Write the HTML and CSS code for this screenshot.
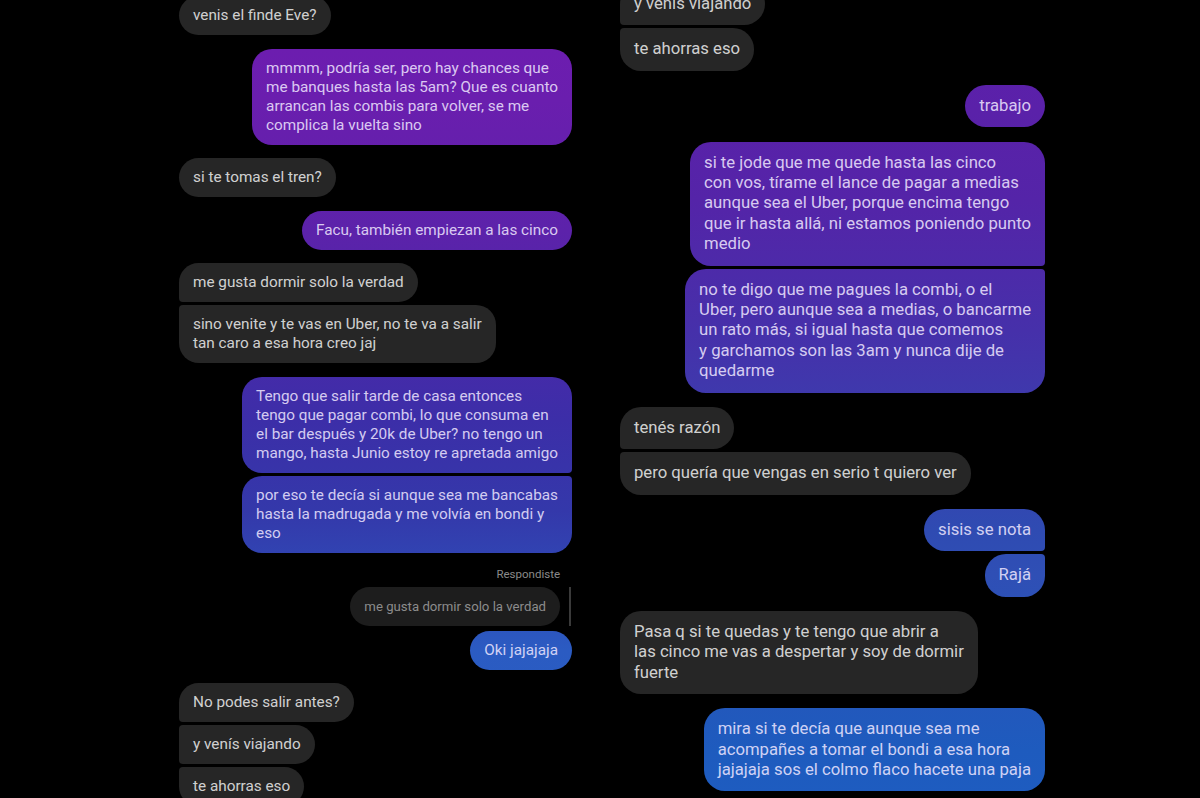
FILE: index.html
```html
<!DOCTYPE html>
<html lang="es">

<head>
    <meta charset="UTF-8">
    <meta name="viewport" content="width=device-width, initial-scale=1.0">
    <title>Chat</title>

    <link rel="stylesheet" href="styles.css">
</head>

<body>

    <div class="screens">

        <!-- left screenshot -->
        <div class="chat chat-left">

            <div class="group in">
                <div class="bubble">venis el finde Eve?</div>
            </div>

            <div class="group out">
                <div class="bubble">mmmm, podría ser, pero hay chances que<br>me banques hasta las 5am? Que es cuanto<br>arrancan las combis para volver, se me<br>complica la vuelta sino</div>
            </div>

            <div class="group in">
                <div class="bubble">si te tomas el tren?</div>
            </div>

            <div class="group out">
                <div class="bubble">Facu, también empiezan a las cinco</div>
            </div>

            <div class="group in">
                <div class="bubble">me gusta dormir solo la verdad</div>
                <div class="bubble">sino venite y te vas en Uber, no te va a salir<br>tan caro a esa hora creo jaj</div>
            </div>

            <div class="group out">
                <div class="bubble">Tengo que salir tarde de casa entonces<br>tengo que pagar combi, lo que consuma en<br>el bar después y 20k de Uber? no tengo un<br>mango, hasta Junio estoy re apretada amigo</div>
                <div class="bubble">por eso te decía si aunque sea me bancabas<br>hasta la madrugada y me volvía en bondi y<br>eso</div>
            </div>

            <div class="group out reply-group">
                <div class="reply-label">Respondiste</div>
                <div class="reply-row">
                    <div class="reply-bubble">me gusta dormir solo la verdad</div>
                    <div class="reply-bar"></div>
                </div>
                <div class="bubble">Oki jajajaja</div>
            </div>

            <div class="group in">
                <div class="bubble">No podes salir antes?</div>
                <div class="bubble">y venís viajando</div>
                <div class="bubble">te ahorras eso</div>
            </div>

        </div>

        <!-- right screenshot -->
        <div class="chat chat-right">

            <div class="group in">
                <div class="bubble">y venís viajando</div>
                <div class="bubble">te ahorras eso</div>
            </div>

            <div class="group out">
                <div class="bubble">trabajo</div>
            </div>

            <div class="group out">
                <div class="bubble">si te jode que me quede hasta las cinco<br>con vos, tírame el lance de pagar a medias<br>aunque sea el Uber, porque encima tengo<br>que ir hasta allá, ni estamos poniendo punto<br>medio</div>
                <div class="bubble">no te digo que me pagues la combi, o el<br>Uber, pero aunque sea a medias, o bancarme<br>un rato más, si igual hasta que comemos<br>y garchamos son las 3am y nunca dije de<br>quedarme</div>
            </div>

            <div class="group in">
                <div class="bubble">tenés razón</div>
                <div class="bubble">pero quería que vengas en serio t quiero ver</div>
            </div>

            <div class="group out">
                <div class="bubble">sisis se nota</div>
                <div class="bubble">Rajá</div>
            </div>

            <div class="group in">
                <div class="bubble">Pasa q si te quedas y te tengo que abrir a<br>las cinco me vas a despertar y soy de dormir<br>fuerte</div>
            </div>

            <div class="group out">
                <div class="bubble">mira si te decía que aunque sea me<br>acompañes a tomar el bondi a esa hora<br>jajajaja sos el colmo flaco hacete una paja</div>
            </div>

        </div>

    </div>

</body>

</html>
```

FILE: styles.css
```css
*,
*::before,
*::after {
    margin: 0;
    padding: 0;
    box-sizing: border-box;
}

html,
body {
    height: 100%;
}

body {
    background-color: #000;
    font-family: Roboto, "Noto Sans", sans-serif;
    overflow: hidden;
}

.screens {
    display: flex;
    align-items: flex-start;
    gap: 48px;
    padding-left: 179px;
    height: 798px;
    overflow: hidden;
}

.chat {
    display: flex;
    flex-direction: column;
}

.chat-left {
    width: 393px;
    margin-top: -4px;
    gap: 13.6px;
    font-size: 15.3px;
    line-height: 19px;
}

.chat-right {
    width: 425px;
    margin-top: -17px;
    gap: 14.2px;
    font-size: 16.7px;
    line-height: 20.4px;
}

.group {
    display: flex;
    flex-direction: column;
    gap: 3px;
}

.group.in {
    align-items: flex-start;
}

.group.out {
    align-items: flex-end;
}

.bubble {
    padding: 10px 14px;
    border-radius: 20px;
    white-space: nowrap;
}

.chat-right .bubble {
    padding: 11px 14px;
    border-radius: 21px;
}

.in .bubble {
    background-color: #262626;
    color: rgba(255, 255, 255, 0.8);
}

.out .bubble {
    color: rgba(240, 232, 255, 0.86);
    background-attachment: fixed;
}

/* instagram style gradient, fixed to the screen */
.chat-left .out .bubble {
    background-image: linear-gradient(to bottom,
            #6e1cb0 0px,
            #6a1eae 100px,
            #5c22aa 230px,
            #3c2ea8 420px,
            #3438aa 510px,
            #2b5bc2 650px,
            #2460c4 798px);
}

.chat-right .out .bubble {
    background-image: linear-gradient(to bottom,
            #5e1eac 0px,
            #5a21a9 110px,
            #5424a8 200px,
            #4630aa 330px,
            #2f4bb2 530px,
            #2f4fb5 575px,
            #1e5bbe 750px,
            #1e5cc0 798px);
}

/* grouped corners */
.in .bubble:not(:last-child) {
    border-bottom-left-radius: 4px;
}

.in .bubble:not(:first-child) {
    border-top-left-radius: 4px;
}

.out .bubble:not(:last-child) {
    border-bottom-right-radius: 4px;
}

.out .bubble:not(:first-child) {
    border-top-right-radius: 4px;
}

.reply-group .bubble {
    border-radius: 20px !important;
}

.reply-label {
    font-size: 11.5px;
    line-height: 14px;
    color: #8a8a8a;
    padding-right: 12px;
}

.reply-row {
    display: flex;
    align-items: stretch;
    margin-top: 3px;
    margin-bottom: 2px;
}

.reply-bubble {
    background-color: #1d1d1d;
    color: #8c8c8c;
    font-size: 13.2px;
    line-height: 19px;
    padding: 10px 14px;
    border-radius: 20px;
    white-space: nowrap;
}

.reply-bar {
    width: 2px;
    margin-left: 9px;
    margin-right: 1px;
    background-color: #3a3a3a;
}
```
